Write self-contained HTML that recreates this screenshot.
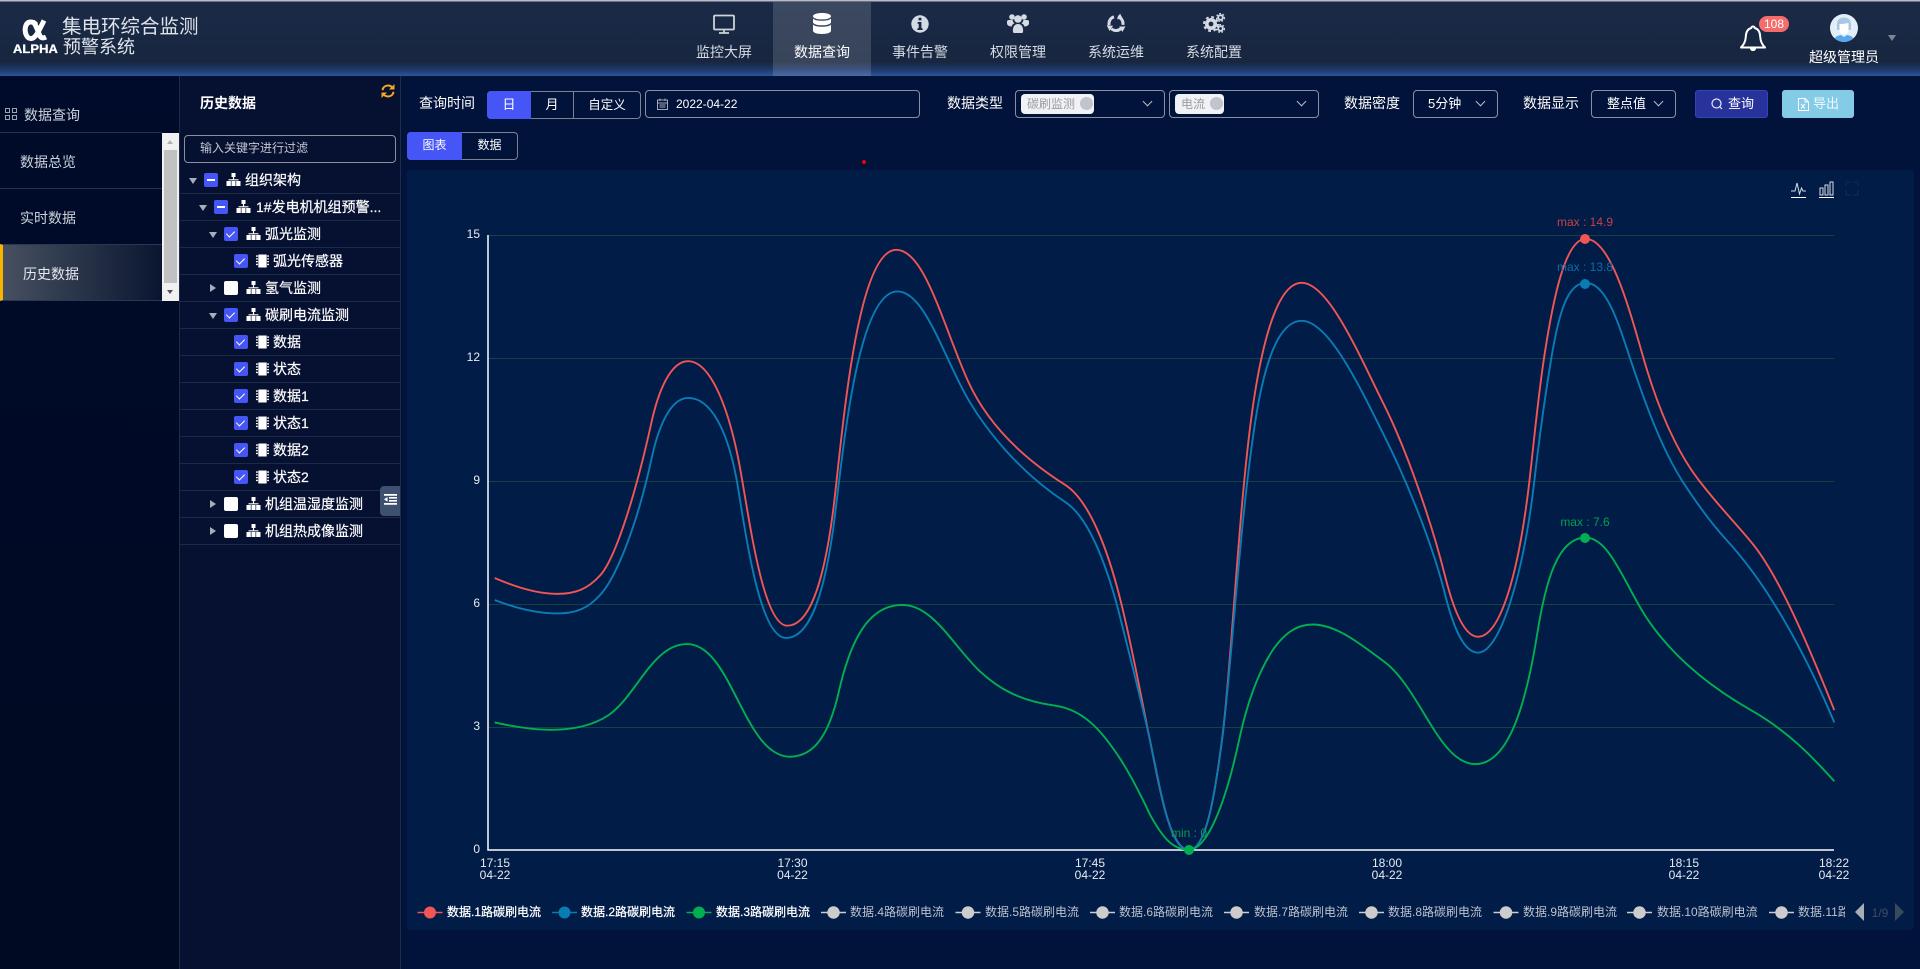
<!DOCTYPE html>
<html lang="zh"><head><meta charset="utf-8"><title>集电环综合监测预警系统</title>
<style>
*{box-sizing:border-box;margin:0;padding:0}
html,body{width:1920px;height:969px;overflow:hidden;background:#01133a;font-family:"Liberation Sans","Noto Sans CJK SC",sans-serif;color:#fff;font-size:13px}
.a{position:absolute}
.t{position:absolute;white-space:nowrap;line-height:20px;height:20px}
.b{position:absolute;border:1px solid #8a8f9c;border-radius:4px}
.hdr{left:0;top:0;width:1920px;height:76px;background:linear-gradient(180deg,#b9bcc2 0,#b9bcc2 1px,#1a2a47 2px,#18263f 62px,#1f3a6e 70px,#2c5499 76px)}
.nav{position:absolute;top:42px;width:98px;text-align:center;font-size:14px;line-height:20px;color:#d5dbe4}
.row{position:absolute;left:180px;width:220px;height:1px;background:#1b2a48}
.cb{position:absolute;width:14px;height:14px;border-radius:2px;background:#4655f5;}
.cb.w{background:#fff}
.cb.i::after{content:"";position:absolute;left:3px;top:6px;width:8px;height:2px;background:#fff}
.cb.c::after{content:"";position:absolute;left:4px;top:2px;width:4px;height:7px;border:solid #fff;border-width:0 1px 1px 0;transform:rotate(45deg)}
.car{position:absolute;width:0;height:0}
.car.d{border-left:4px solid transparent;border-right:4px solid transparent;border-top:6px solid #a7adb9}
.car.r{border-top:4px solid transparent;border-bottom:4px solid transparent;border-left:6px solid #a7adb9}
.tx{position:absolute;white-space:nowrap;font-size:14px;line-height:20px;color:#fff;-webkit-text-stroke:.2px #fff}
.ic{position:absolute}
.chev{position:absolute;width:7px;height:7px;border:solid #b8bcc6;border-width:0 1px 1px 0;transform:rotate(45deg)}
.tag{position:absolute;top:94px;height:20px;background:#f1f2f5;border-radius:4px;color:#9a9ca3;font-size:12px;line-height:20px;padding-left:6px}
.tag i{position:absolute;right:1px;top:3px;width:13px;height:13px;border-radius:50%;background:#c0c4cc}
.lg{position:absolute;top:902px;font-size:12px;line-height:20px;height:20px;white-space:nowrap;color:#bcc2cd}
.lg.on{color:#fff;-webkit-text-stroke:.25px #fff}
</style></head><body>
<svg width="0" height="0" style="position:absolute"><defs>
<symbol id="org" viewBox="0 0 14 14"><path fill="#fff" d="M5 0h4v4H5zM6.400 4h1.200v3H6.400zM2 6.200h10v1.200H2zM0 8h4.400v5H0zM4.900 8h4.200v5H4.900zM9.600 8H14v5H9.600z"/><path fill="#071233" d="M4.400 8h.5v5h-.5zM9.100 8h.5v5h-.5z"/></symbol>
<symbol id="chip" viewBox="0 0 14 14"><path fill="#fff" d="M2.500 0h9v14h-9zM0 1h2v1.400H0zM0 4h2v1.400H0zM0 7h2v1.400H0zM0 10h2v1.400H0zM12 1h2v1.400h-2zM12 4h2v1.400h-2zM12 7h2v1.400h-2zM12 10h2v1.400h-2z"/></symbol>
</defs></svg>

<!-- header -->
<div class="a hdr"></div>
<div class="a" style="left:773px;top:2px;width:98px;height:74px;background:rgba(255,255,255,.14)"></div>
<svg class="a" style="left:22px;top:18px" width="28" height="24" viewBox="0 0 28 24"><path fill="none" stroke="#fff" stroke-width="5" d="M14 6.500C12 3.500 5 2 3.500 9c-1.300 6 1.500 12 6 11.500 4.500-.5 8-9 12.500-18M11 4c3 2 5 10 7 14 1 2 3 2.500 6 1"/></svg>
<div class="t" style="left:13px;top:40px;font:bold 11.500px/20px 'Liberation Sans',sans-serif;letter-spacing:.1px;transform:scaleX(1.12);transform-origin:left;-webkit-text-stroke:.3px #fff">ALPHA</div>
<div class="t" style="left:62px;top:17px;font-size:19.500px;color:#dfe3ea">集电环综合监测</div>
<div class="t" style="left:63px;top:37px;font-size:18px;color:#dfe3ea">预警系统</div>

<svg class="a" style="left:712px;top:14px" width="24" height="20" viewBox="0 0 24 20"><path fill="none" stroke="#cfd3da" stroke-width="1.800" d="M3 1.500h18a1 1 0 0 1 1 1v12a1 1 0 0 1-1 1H3a1 1 0 0 1-1-1v-12a1 1 0 0 1 1-1zM12 16v3M7 19h10"/></svg>
<svg class="a" style="left:813px;top:13px" width="18" height="21" viewBox="0 0 18 21"><path fill="#fff" d="M9 0c5 0 9 1.300 9 3.200S14 6.400 9 6.400 0 5.100 0 3.200 4 0 9 0zM0 5.500c1.500 1.700 5 2.300 9 2.300s7.500-.6 9-2.300v3.600c0 1.900-4 3.200-9 3.200s-9-1.300-9-3.200zM0 11.500c1.500 1.700 5 2.300 9 2.300s7.500-.6 9-2.300v6.300c0 1.900-4 3.200-9 3.200s-9-1.300-9-3.200z"/></svg>
<svg class="a" style="left:911px;top:15px" width="18" height="18" viewBox="0 0 18 18"><circle cx="9" cy="9" r="8.700" fill="#d5dbe4"/><path fill="#18263f" d="M7.600 2.800h2.800v2.600H7.600zM6.600 7h3.800v6.200h1.200V15H6.400v-1.800h1.300V8.700H6.600z"/></svg>
<svg class="a" style="left:1007px;top:13px" width="22" height="20" viewBox="0 0 22 20"><g fill="#d5dbe4"><circle cx="5" cy="4" r="2.800"/><circle cx="17" cy="4" r="2.800"/><circle cx="11" cy="6" r="3.800"/><path d="M0 8.500c0-1 1-1.500 2-1.500h3.500c.3 1.300.8 2.400 2 3.300-1.600.7-2.500 1.700-2.800 3.200C2 13.500 0 12 0 10.500zM22 8.500c0-1 -1-1.500-2-1.500h-3.500c-.3 1.300-.8 2.400-2 3.300 1.600.7 2.500 1.700 2.800 3.200 2.700 0 4.700-1.500 4.700-3zM6 19c-.6-4 1-8 5-8s5.600 4 5 8c-.2.700-.7 1-1.200 1H7.200c-.5 0-1-.3-1.200-1z"/></g></svg>
<svg class="a" style="left:1106px;top:13px" width="20" height="20" viewBox="0 0 20 20"><circle cx="10" cy="10.500" r="7" fill="none" stroke="#d5dbe4" stroke-width="3" stroke-dasharray="10.500 4.160" transform="rotate(-75 10 10.500)"/><g fill="#d5dbe4"><path d="M14 .5l3 5.500-6 .2zM3.500 18l-2.800-5.800 6.300.5zM19.500 13.500l-3.200 5.500-3-5.500z"/></g></svg>
<svg class="a" style="left:1203px;top:13px" width="22" height="20" viewBox="0 0 22 20"><g fill="none" stroke="#d5dbe4"><circle cx="8" cy="11" r="4.200" stroke-width="3.600"/><circle cx="8" cy="11" r="7" stroke-width="2" stroke-dasharray="2.800 2.700"/><circle cx="17.500" cy="4.500" r="2.300" stroke-width="1.800"/><circle cx="17.500" cy="4.500" r="3.900" stroke-width="1.300" stroke-dasharray="1.800 1.600"/><circle cx="17.500" cy="15.500" r="2.300" stroke-width="1.800"/><circle cx="17.500" cy="15.500" r="3.900" stroke-width="1.300" stroke-dasharray="1.800 1.600"/></g></svg>
<div class="nav" style="left:675px">监控大屏</div>
<div class="nav" style="left:773px;color:#fff">数据查询</div>
<div class="nav" style="left:871px">事件告警</div>
<div class="nav" style="left:969px">权限管理</div>
<div class="nav" style="left:1067px">系统运维</div>
<div class="nav" style="left:1165px">系统配置</div>

<svg class="a" style="left:1738px;top:24px" width="30" height="30" viewBox="0 0 30 30"><path fill="none" stroke="#fff" stroke-width="2" stroke-linejoin="round" d="M15 2.500c1 0 1.700.7 1.700 1.500 4 1 5.300 4.500 5.500 8.500.2 5 1.700 8 4.800 11H3c3.100-3 4.600-6 4.800-11 .2-4 1.500-7.500 5.500-8.500 0-.8.7-1.500 1.700-1.500z"/><path fill="#fff" d="M12 24h6c0 2-1.200 3-3 3s-3-1-3-3z"/></svg>
<div class="a" style="left:1759px;top:16px;width:30px;height:16px;border-radius:8px;background:#f56c6c;font-size:12px;line-height:16px;text-align:center">108</div>
<svg class="a" style="left:1830px;top:14px" width="28" height="28" viewBox="0 0 28 28"><defs><clipPath id="av"><circle cx="14" cy="14" r="14"/></clipPath></defs><g clip-path="url(#av)"><rect width="28" height="28" fill="#e3eef9"/><path fill="#a9c6e2" d="M7 16V10c0-4 3-6.500 7-6.500s7 2.500 7 6.500v6z"/><path fill="#fff" d="M9.500 10c3 0 6-.5 9-1v7c0 2.500-2 4.500-4.500 4.500S9.500 18.500 9.500 16z"/><path fill="#5aa7ec" d="M3 28c0-4 4-6.500 8-7l3 2 3-2c4 .5 8 3 8 7z"/></g></svg>
<div class="t" style="left:1809px;top:47px;width:70px;text-align:center;font-size:14px">超级管理员</div>
<div class="car d" style="left:1888px;top:35px;border-left-width:4.500px;border-right-width:4.500px;border-top-color:#7d8593"></div>

<!-- left menu -->
<div class="a" style="left:0;top:76px;width:179px;height:893px;background:linear-gradient(180deg,#000b2b,#000a20)"></div>
<div class="a" style="left:179px;top:76px;width:1px;height:893px;background:#1e2c47"></div>
<svg class="a" style="left:5px;top:108px" width="12" height="12" viewBox="0 0 12 12"><path fill="none" stroke="#9aa3b2" d="M.5.5h4v4h-4zM7.500.5h4v4h-4zM.5 7.500h4v4h-4zM7.500 7.500h4v4h-4z"/></svg>
<div class="t" style="left:24px;top:105px;font-size:14px;color:#cdd3dc">数据查询</div>
<div class="a" style="left:0;top:132px;width:162px;height:1px;background:#27344d"></div>
<div class="t" style="left:20px;top:152px;font-size:14px;color:#cdd3dc">数据总览</div>
<div class="a" style="left:0;top:188px;width:162px;height:1px;background:#27344d"></div>
<div class="t" style="left:20px;top:208px;font-size:14px;color:#cdd3dc">实时数据</div>
<div class="a" style="left:0;top:244px;width:162px;height:57px;background:linear-gradient(90deg,#465060,#0a1530);border-left:3px solid #f7b500;border-top:1px solid #2a3750;border-bottom:1px solid #2a3750"></div>
<div class="t" style="left:23px;top:264px;font-size:14px;color:#e6e9ee">历史数据</div>
<div class="a" style="left:162px;top:133px;width:17px;height:168px;background:#f1f1f1"></div>
<div class="a" style="left:164px;top:150px;width:13px;height:133px;background:#c1c1c1"></div>
<div class="car" style="left:167px;top:140px;border-left:3.500px solid transparent;border-right:3.500px solid transparent;border-bottom:4px solid #b0b0b0"></div>
<div class="car" style="left:167px;top:290px;border-left:3.500px solid transparent;border-right:3.500px solid transparent;border-top:4px solid #505050"></div>

<!-- tree panel -->
<div class="a" style="left:180px;top:76px;width:220px;height:893px;background:#061031"></div>
<div class="a" style="left:400px;top:76px;width:1px;height:893px;background:#1e2c47"></div>
<div class="t" style="left:200px;top:93px;font-weight:bold;font-size:14px">历史数据</div>
<svg class="a" style="left:381px;top:84px" width="14" height="14" viewBox="0 0 14 14"><g fill="none" stroke="#f5a623" stroke-width="2"><path d="M1.500 6.200C2 3 4.500 1.500 7 1.500c2 0 3.500 1 4.500 2.300"/><path d="M12.500 7.800C12 11 9.500 12.500 7 12.500c-2 0-3.500-1-4.500-2.300"/></g><path fill="#f5a623" d="M13.500 0v5.500H8zM.5 14V8.500H6z"/></svg>
<div class="b" style="left:184px;top:135px;width:212px;height:28px"></div>
<div class="t" style="left:200px;top:138px;font-size:12px;color:#c3c7cf">输入关键字进行过滤</div>

<div class="row" style="top:193px"></div><div class="row" style="top:220px"></div><div class="row" style="top:247px"></div><div class="row" style="top:274px"></div><div class="row" style="top:301px"></div><div class="row" style="top:328px"></div><div class="row" style="top:355px"></div><div class="row" style="top:382px"></div><div class="row" style="top:409px"></div><div class="row" style="top:436px"></div><div class="row" style="top:463px"></div><div class="row" style="top:490px"></div><div class="row" style="top:517px"></div><div class="row" style="top:544px"></div>

<div class="car d" style="left:189px;top:178px"></div><div class="cb i" style="left:204px;top:173px"></div><svg class="ic" style="left:226px;top:173px" width="15" height="14"><use href="#org"/></svg><div class="tx" style="left:245px;top:170px">组织架构</div>
<div class="car d" style="left:199px;top:205px"></div><div class="cb i" style="left:214px;top:200px"></div><svg class="ic" style="left:236px;top:200px" width="15" height="14"><use href="#org"/></svg><div class="tx" style="left:256px;top:197px">1#发电机机组预警...</div>
<div class="car d" style="left:209px;top:232px"></div><div class="cb c" style="left:224px;top:227px"></div><svg class="ic" style="left:246px;top:227px" width="15" height="14"><use href="#org"/></svg><div class="tx" style="left:265px;top:224px">弧光监测</div>
<div class="cb c" style="left:234px;top:254px"></div><svg class="ic" style="left:256px;top:254px" width="13" height="14"><use href="#chip"/></svg><div class="tx" style="left:273px;top:251px">弧光传感器</div>
<div class="car r" style="left:210px;top:284px"></div><div class="cb w" style="left:224px;top:281px"></div><svg class="ic" style="left:246px;top:281px" width="15" height="14"><use href="#org"/></svg><div class="tx" style="left:265px;top:278px">氢气监测</div>
<div class="car d" style="left:209px;top:313px"></div><div class="cb c" style="left:224px;top:308px"></div><svg class="ic" style="left:246px;top:308px" width="15" height="14"><use href="#org"/></svg><div class="tx" style="left:265px;top:305px">碳刷电流监测</div>
<div class="cb c" style="left:234px;top:335px"></div><svg class="ic" style="left:256px;top:335px" width="13" height="14"><use href="#chip"/></svg><div class="tx" style="left:273px;top:332px">数据</div>
<div class="cb c" style="left:234px;top:362px"></div><svg class="ic" style="left:256px;top:362px" width="13" height="14"><use href="#chip"/></svg><div class="tx" style="left:273px;top:359px">状态</div>
<div class="cb c" style="left:234px;top:389px"></div><svg class="ic" style="left:256px;top:389px" width="13" height="14"><use href="#chip"/></svg><div class="tx" style="left:273px;top:386px">数据1</div>
<div class="cb c" style="left:234px;top:416px"></div><svg class="ic" style="left:256px;top:416px" width="13" height="14"><use href="#chip"/></svg><div class="tx" style="left:273px;top:413px">状态1</div>
<div class="cb c" style="left:234px;top:443px"></div><svg class="ic" style="left:256px;top:443px" width="13" height="14"><use href="#chip"/></svg><div class="tx" style="left:273px;top:440px">数据2</div>
<div class="cb c" style="left:234px;top:470px"></div><svg class="ic" style="left:256px;top:470px" width="13" height="14"><use href="#chip"/></svg><div class="tx" style="left:273px;top:467px">状态2</div>
<div class="car r" style="left:210px;top:500px"></div><div class="cb w" style="left:224px;top:497px"></div><svg class="ic" style="left:246px;top:497px" width="15" height="14"><use href="#org"/></svg><div class="tx" style="left:265px;top:494px">机组温湿度监测</div>
<div class="car r" style="left:210px;top:527px"></div><div class="cb w" style="left:224px;top:524px"></div><svg class="ic" style="left:246px;top:524px" width="15" height="14"><use href="#org"/></svg><div class="tx" style="left:265px;top:521px">机组热成像监测</div>
<div class="a" style="left:380px;top:486px;width:20px;height:30px;background:#3d5070;border-radius:4px 0 0 4px"></div>
<svg class="a" style="left:384px;top:494px" width="13" height="11" viewBox="0 0 13 11"><path fill="#fff" d="M0 0h13v1.800H0zM5 3h8v1.600H5zM5 6h8v1.600H5zM0 9h13v1.800H0zM0 5.300 3.500 3v4.800z"/></svg>

<!-- toolbar -->
<div class="t" style="left:419px;top:93px;font-size:14px">查询时间</div>
<div class="a" style="left:487px;top:91px;width:154px;height:28px;border:1px solid #7c8290;border-radius:4px"></div>
<div class="a" style="left:487px;top:91px;width:44px;height:28px;background:#4655f5;border-radius:4px 0 0 4px;text-align:center;line-height:28px">日</div>
<div class="a" style="left:531px;top:91px;width:42px;height:28px;text-align:center;line-height:28px">月</div>
<div class="a" style="left:573px;top:91px;width:1px;height:28px;background:#7c8290"></div>
<div class="a" style="left:574px;top:91px;width:66px;height:28px;text-align:center;line-height:28px;font-size:12.500px">自定义</div>
<div class="b" style="left:645px;top:90px;width:275px;height:28px"></div>
<svg class="a" style="left:657px;top:98px" width="11" height="12" viewBox="0 0 11 12"><path fill="none" stroke="#a3a8b4" d="M.5 2h10v9.500H.5zM.5 5h10M3 .5v2.500M8 .5v2.500M2.500 7h6M2.500 9h6"/></svg>
<div class="t" style="left:676px;top:94px;font-size:12px;width:70px">2022-04-22</div>
<div class="t" style="left:947px;top:93px;font-size:14px">数据类型</div>
<div class="b" style="left:1015px;top:90px;width:150px;height:28px"></div>
<div class="tag" style="left:1021px;width:73px">碳刷监测<i></i></div>
<div class="chev" style="left:1144px;top:98px"></div>
<div class="b" style="left:1169px;top:90px;width:150px;height:28px"></div>
<div class="tag" style="left:1175px;width:49px">电流<i></i></div>
<div class="chev" style="left:1298px;top:98px"></div>
<div class="t" style="left:1344px;top:93px;font-size:14px">数据密度</div>
<div class="b" style="left:1413px;top:90px;width:85px;height:28px"></div>
<div class="t" style="left:1428px;top:94px">5分钟</div>
<div class="chev" style="left:1477px;top:98px"></div>
<div class="t" style="left:1523px;top:93px;font-size:14px">数据显示</div>
<div class="b" style="left:1591px;top:90px;width:85px;height:28px"></div>
<div class="t" style="left:1607px;top:94px">整点值</div>
<div class="chev" style="left:1655px;top:98px"></div>
<div class="a" style="left:1695px;top:90px;width:73px;height:28px;background:#27339a;border:1px solid #3443b8;border-radius:3px"></div>
<svg class="a" style="left:1711px;top:98px" width="12" height="12" viewBox="0 0 12 12"><circle cx="5.500" cy="5.500" r="4.500" fill="none" stroke="#e6e8f5" stroke-width="1.200"/><path stroke="#e6e8f5" stroke-width="1.200" d="M8.800 8.800 11 11"/></svg>
<div class="t" style="left:1728px;top:94px">查询</div>
<div class="a" style="left:1782px;top:90px;width:72px;height:28px;background:#84cbe8;border-radius:3px"></div>
<svg class="a" style="left:1798px;top:98px" width="11" height="13" viewBox="0 0 11 13"><path fill="none" stroke="#fff" d="M.5.5h6.500l3.500 3.500v8.500H.5zM7 .5v3.500h3.500M3 6l4 4.500M7 6l-4 4.500"/></svg>
<div class="t" style="left:1813px;top:94px;color:#f2fafd">导出</div>

<div class="a" style="left:407px;top:132px;width:111px;height:28px;border:1px solid #7c8290;border-radius:4px"></div>
<div class="a" style="left:407px;top:132px;width:55px;height:28px;background:#4655f5;border-radius:4px 0 0 4px;text-align:center;line-height:27px;font-size:12px">图表</div>
<div class="a" style="left:462px;top:132px;width:55px;height:28px;text-align:center;line-height:27px;font-size:12px">数据</div>
<div class="a" style="left:862px;top:160px;width:4px;height:4px;border-radius:50%;background:#e60012"></div>

<!-- chart card -->
<div class="a" style="left:407px;top:170px;width:1507px;height:760px;background:#001c47;border-radius:3px"></div>
<svg class="a" style="left:0;top:0" width="1920" height="969" viewBox="0 0 1920 969" font-family="Liberation Sans,Noto Sans CJK SC,sans-serif" font-size="12">
<g stroke="#184040" stroke-width="1"><path d="M488 235.500H1834M488 358.500H1834M488 481.500H1834M488 604.500H1834M488 727.500H1834"/></g>
<path d="M488 235V850H1834" fill="none" stroke="#fff" stroke-width="1.500"/>
<g fill="#e8ebf0" text-anchor="end"><text x="480" y="238">15</text><text x="480" y="361">12</text><text x="480" y="484">9</text><text x="480" y="607">6</text><text x="480" y="730">3</text><text x="480" y="853">0</text></g>
<g fill="#e8ebf0" text-anchor="middle"><text x="495" y="867">17:15</text><text x="495" y="879">04-22</text><text x="792.500" y="867">17:30</text><text x="792.500" y="879">04-22</text><text x="1090" y="867">17:45</text><text x="1090" y="879">04-22</text><text x="1387" y="867">18:00</text><text x="1387" y="879">04-22</text><text x="1684" y="867">18:15</text><text x="1684" y="879">04-22</text><text x="1834" y="867">18:22</text><text x="1834" y="879">04-22</text></g>
<g transform="scale(1.2245)" fill="none" stroke-width="1.550" stroke-linejoin="round">
<path stroke="#f25555" d="M404 472C420 479 438 485 455 485C470 485 480 481 490 470C503 456 520 400 532 345C538 318 548 295 562 295C578 295 593 325 603 375C611 415 622 511 643 511C660 511 672 480 680 420C687 368 698 204 732 204C755 204 770 265 790 310C805 344 832 372 870 396C890 409 905 450 915 490C925 530 932 570 939 604C947 643 955 694 971 694C985 694 992 650 998 604C1006 543 1012 400 1025 320C1033 271 1045 231 1063 231C1085 231 1110 290 1130 330C1150 370 1170 430 1180 470C1189 506 1198 520 1207 520C1225 520 1240 470 1249 393C1253 358 1256 325 1261 292C1268 246 1278 195 1295 195C1315 195 1330 250 1342 292C1355 337 1370 370 1388 393C1405 415 1420 430 1432 445C1455 474 1480 535 1498 580"/>
<path stroke="#0a7cb4" d="M404 490C422 497 440 501 455 501C470 501 480 497 490 486C503 472 520 430 532 375C538 347 548 325 562 325C580 325 595 350 603 400C611 450 622 521 642 521C660 521 672 490 680 435C687 387 698 238 733 238C755 238 770 290 790 325C805 351 832 385 870 410C890 423 905 465 915 505C925 545 932 572 939 604C949 650 955 694 971 694C985 694 992 650 998 604C1006 543 1012 430 1025 345C1033 293 1045 262 1063 262C1085 262 1110 315 1130 355C1150 395 1170 445 1180 485C1189 521 1198 533 1207 533C1225 533 1244 470 1253 393C1257 358 1262 322 1267 292C1273 256 1280 231 1295 231C1312 231 1322 265 1331 292C1345 334 1358 368 1374 393C1385 410 1398 428 1410 441C1445 479 1475 535 1498 590"/>
<path stroke="#00b050" d="M404 590C422 594 438 596 450 596C470 596 485 592 497 584C520 568 533 526 561 526C588 526 600 575 620 602C628 613 637 618 645 618C665 618 677 600 685 565C695 521 710 494 737 494C762 494 778 527 800 548C815 562 832 572 860 576C885 579 900 597 915 620C924 634 932 650 939 665C950 685 958 694 971 694C985 694 1000 660 1012 604C1020 567 1030 545 1040 530C1050 516 1060 510 1072 510C1092 510 1112 527 1130 540C1160 562 1175 624 1205 624C1232 624 1246 575 1255 520C1262 475 1272 439 1295 439C1315 439 1328 480 1345 505C1365 535 1395 560 1430 580C1460 597 1480 618 1498 638"/>
</g>
<circle cx="1585" cy="239" r="5" fill="#f25555"/><circle cx="1585" cy="284" r="5" fill="#0a7cb4"/><circle cx="1585" cy="538" r="5" fill="#00b050"/><circle cx="1189" cy="850" r="5" fill="#00b050"/>
<g text-anchor="middle"><text x="1585" y="226" fill="#c8404a">max : 14.9</text><text x="1585" y="271" fill="#0a6fa6">max : 13.8</text><text x="1585" y="526" fill="#00a050">max : 7.6</text><text x="1189" y="837" fill="#0a9a55">min : 0</text></g>
<!-- toolbox -->
<path fill="none" stroke="#d8dce4" d="M1791 191h4l2-8 2.500 11 2-6 1.500 3h3"/><path stroke="#fff" d="M1791 197.500h15M1819 197.500h15"/>
<path fill="none" stroke="#d8dce4" d="M1820 188h3v7h-3zM1825 185h3v10h-3zM1830 182h3v13h-3z"/>
<path fill="none" stroke="#1d2b44" d="M1846 186v-4h5M1858 190v5h-5M1846 190v5h5M1858 186v-4h-5"/>
<!-- legend -->
<g stroke-width="1.500"><path stroke="#f25555" d="M417.500 912.500h25"/><circle cx="430" cy="912.500" r="6" fill="#f25555"/><path stroke="#0a7cb4" d="M552 912.500h25"/><circle cx="564.500" cy="912.500" r="6" fill="#0a7cb4"/><path stroke="#00b050" d="M686.500 912.500h25"/><circle cx="699" cy="912.500" r="6" fill="#00b050"/>
<g stroke="#ccc" fill="#ccc"><path d="M821 912.500h25M955.500 912.500h25M1090 912.500h25M1224 912.500h25M1359 912.500h25M1493.500 912.500h25M1627 912.500h25M1769 912.500h25"/><circle cx="833.500" cy="912.500" r="5.500"/><circle cx="968" cy="912.500" r="5.500"/><circle cx="1102.500" cy="912.500" r="5.500"/><circle cx="1236.500" cy="912.500" r="5.500"/><circle cx="1371.500" cy="912.500" r="5.500"/><circle cx="1506" cy="912.500" r="5.500"/><circle cx="1639.500" cy="912.500" r="5.500"/><circle cx="1781.500" cy="912.500" r="5.500"/></g></g>
<path fill="#a6adb8" d="M1864 903v18l-9-9z"/><path fill="#3a4a5e" d="M1895 903v18l9-9z"/>
<text x="1880" y="917" fill="#3d4c60" text-anchor="middle">1/9</text>
</svg>
<div class="lg on" style="left:447px">数据.1路碳刷电流</div>
<div class="lg on" style="left:581px">数据.2路碳刷电流</div>
<div class="lg on" style="left:716px">数据.3路碳刷电流</div>
<div class="lg" style="left:850px">数据.4路碳刷电流</div>
<div class="lg" style="left:985px">数据.5路碳刷电流</div>
<div class="lg" style="left:1119px">数据.6路碳刷电流</div>
<div class="lg" style="left:1254px">数据.7路碳刷电流</div>
<div class="lg" style="left:1388px">数据.8路碳刷电流</div>
<div class="lg" style="left:1523px">数据.9路碳刷电流</div>
<div class="lg" style="left:1657px">数据.10路碳刷电流</div>
<div class="lg" style="left:1798px;width:47px;overflow:hidden">数据.11路碳刷电流</div>
</body></html>
